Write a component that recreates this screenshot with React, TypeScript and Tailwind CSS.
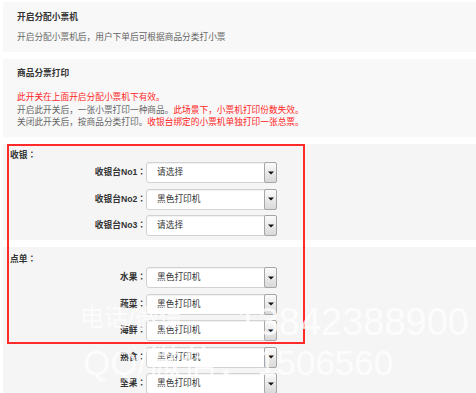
import React from 'react'

const CASHIER_ROWS = [
  { label: '收银台No1', value: '请选择' },
  { label: '收银台No2', value: '黑色打印机' },
  { label: '收银台No3', value: '请选择' },
]

const ORDER_ROWS = [
  { label: '水果', value: '黑色打印机' },
  { label: '蔬菜', value: '黑色打印机' },
  { label: '海鲜', value: '黑色打印机' },
  { label: '熟食', value: '黑色打印机' },
  { label: '坚果', value: '黑色打印机' },
]

// centred full-width colon, as in the original rendering
function Colon() {
  return <span className="font-['Noto_Sans_CJK_TC',sans-serif]">：</span>
}

function FakeSelect({ value }: { value: string }) {
  return (
    <div className="w-[131px] h-[21px] flex items-stretch bg-white border border-[#d2d2d2] rounded-[3px] shadow-[inset_0_1px_1px_rgba(0,0,0,0.06)]">
      <div className="flex-1 pl-[10px] flex items-center text-[#333] leading-none">{value}</div>
      <div className="w-[13px] -my-px -mr-px flex items-center justify-center border border-[#a6a6a6] rounded-[2px] bg-gradient-to-b from-[#fbfbfb] to-[#d9d9d9]">
        <svg width="6" height="4" viewBox="0 0 6 4">
          <path d="M0 0.5H6L3 3.5Z" fill="#111" />
        </svg>
      </div>
    </div>
  )
}

function Row({ label, value }: { label: string; value: string }) {
  return (
    <div className="flex items-center">
      <div className="w-[143px] text-right font-bold text-[#333] leading-none">
        {label}
        <Colon />
      </div>
      <FakeSelect value={value} />
    </div>
  )
}

export default function App() {
  return (
    <div className="relative w-[476px] h-[393px] overflow-hidden bg-white text-[8.7px] font-['Liberation_Sans','Noto_Sans_CJK_SC',sans-serif]">
      <div className="pl-[3px] pt-[2px] flex flex-col gap-[7px]">
        {/* 开启分配小票机 */}
        <div className="h-[50px] bg-[#f8f8f8] pl-[14px] pt-[9px]">
          <div className="font-bold text-[#333] leading-[12px]">开启分配小票机</div>
          <div className="mt-[8px] text-[#666] leading-[12px]">开启分配小票机后，用户下单后可根据商品分类打小票</div>
        </div>

        {/* 商品分票打印 */}
        <div className="h-[78px] bg-[#f8f8f8] pl-[14px] pt-[8px]">
          <div className="font-bold text-[#333] leading-[12px]">商品分票打印</div>
          <div className="mt-[12px] leading-[12.5px] text-[#666]">
            <div className="text-[#ff2424]">此开关在上面开启分配小票机下有效。</div>
            <div>
              开启此开关后，一张小票打印一种商品。
              <span className="text-[#ff2424]">此场景下，小票机打印份数失效。</span>
            </div>
            <div>
              关闭此开关后，按商品分类打印。
              <span className="text-[#ff2424]">收银台绑定的小票机单独打印一张总票。</span>
            </div>
          </div>
        </div>

        {/* 收银 */}
        <div className="h-[96px] bg-[#f5f5f5] pt-[5px]">
          <div className="pl-[7px] font-bold text-[#333] leading-[12px]">
            收银<Colon />
          </div>
          <div className="mt-[1px] flex flex-col gap-[5.5px]">
            {CASHIER_ROWS.map((r) => (
              <Row key={r.label} label={r.label} value={r.value} />
            ))}
          </div>
        </div>

        {/* 点单 */}
        <div className="h-[160px] bg-[#f5f5f5] pt-[6px]">
          <div className="pl-[7px] font-bold text-[#333] leading-[12px]">
            点单<Colon />
          </div>
          <div className="mt-[2px] flex flex-col gap-[5.5px]">
            {ORDER_ROWS.map((r) => (
              <Row key={r.label} label={r.label} value={r.value} />
            ))}
          </div>
        </div>
      </div>

      {/* red annotation box */}
      <div className="pointer-events-none absolute left-[7px] top-[144px] w-[298px] h-[200px] border-2 border-[#ff2b2b]" />

      {/* watermark */}
      <div className="pointer-events-none absolute inset-0 text-white/75 leading-none">
        <div className="absolute left-[80px] top-[306px] text-[24px]">电话/微信：</div>
        <div className="absolute right-[7px] top-[303px] text-[38px]">13842388900</div>
        <div className="absolute left-[83px] top-[345px] text-[35px]">QQ/微信：</div>
        <div className="absolute left-[257px] top-[345px] text-[35px]">1506560</div>
      </div>
    </div>
  )
}
